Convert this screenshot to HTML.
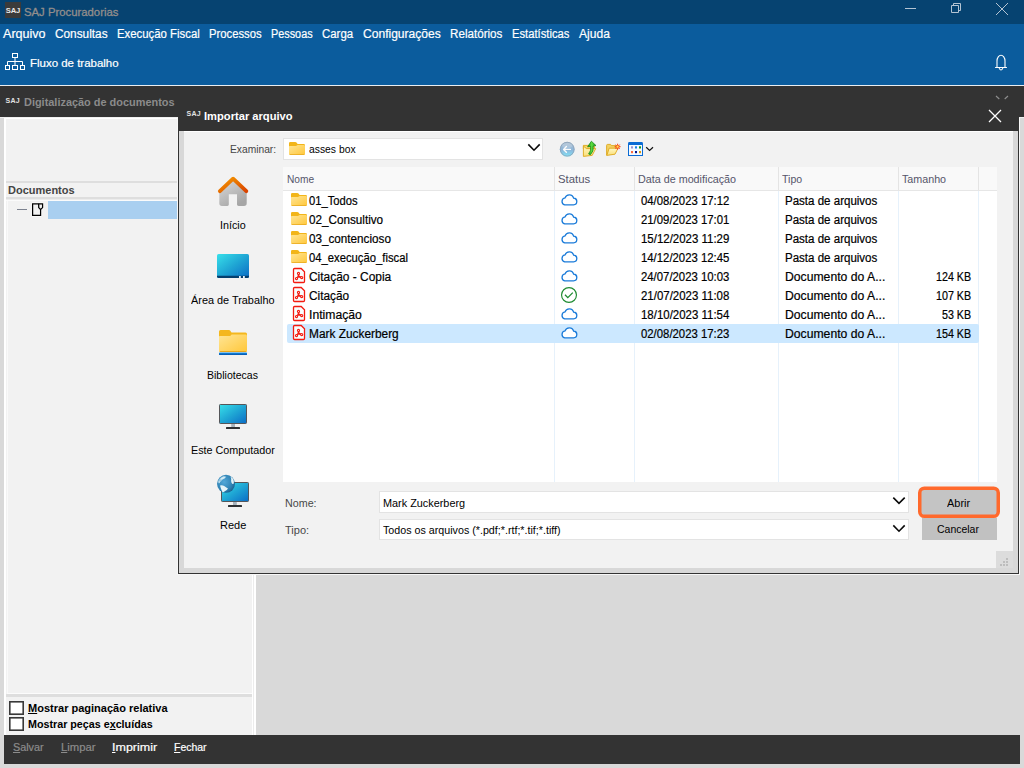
<!DOCTYPE html>
<html><head><meta charset="utf-8"><title>SAJ Procuradorias</title>
<style>
html,body{margin:0;padding:0}
body{width:1024px;height:768px;overflow:hidden;position:relative;background:#d9d9d9;font-family:"Liberation Sans",sans-serif}
.a{position:absolute}
.t{transform-origin:0 50%;position:absolute;white-space:pre;line-height:16px;height:16px;font-family:"Liberation Sans",sans-serif}
.t u{text-decoration:underline;text-underline-offset:1px}
svg{position:absolute;overflow:visible}

</style></head>
<body>
<!-- main window chrome -->
<div class="a" style="left:0;top:0;width:1024px;height:24px;background:#064371"></div>
<div class="a" style="left:0;top:24px;width:1024px;height:61px;background:#0b5c9d"></div>
<div class="a" style="left:0;top:85px;width:1024px;height:1px;background:#e9edf1"></div>
<div class="a" style="left:0;top:86px;width:1024px;height:31px;background:#333"></div>
<div class="a" style="left:0;top:117px;width:1024px;height:1px;background:#efefef"></div>

<!-- SAJ logo title -->
<div class="a" style="left:5px;top:2px;width:16px;height:16px;background:#3b3b3b"></div>
<div class="t" style="left:5px;top:6.5px;width:16px;text-align:center;font-size:7.6px;line-height:8px;height:8px;font-weight:700;color:#e9e9e9;letter-spacing:-0.1px">SAJ</div>

<!-- window controls -->
<svg style="left:896px;top:0" width="128" height="24" viewBox="896 0 128 24">
  <path d="M905 8.5H916" stroke="#b4c4d3" stroke-width="1" fill="none"/>
  <path d="M951.5 5.5H958.5V12.5H951.5Z M953.5 5.5V3.5H960.5V10.5H958.5" stroke="#b4c4d3" stroke-width="1" fill="none"/>
  <path d="M996 3L1008 15M1008 3L996 15" stroke="#b4c4d3" stroke-width="1" fill="none"/>
</svg>

<!-- fluxo icon -->
<svg style="left:0;top:48px" width="32" height="28" viewBox="0 48 32 28">
  <g stroke="#fff" stroke-width="1" fill="none">
    <rect x="12.5" y="53.5" width="5" height="4"/>
    <path d="M15 58V61.5M7.5 65.5V61.5H22.5V65.5M15 61.5V65.5"/>
    <rect x="5.5" y="65.5" width="4" height="4"/>
    <rect x="12.5" y="65.5" width="5" height="4"/>
    <rect x="20.5" y="65.5" width="4" height="4"/>
  </g>
</svg>

<!-- bell -->
<svg style="left:990px;top:50px" width="24" height="26" viewBox="990 50 24 26">
  <path d="M995.5 67.5H1006.5M997 67.5V61C997 57.5 999 55.3 1001 55.3C1003 55.3 1005 57.5 1005 61V67.5M999.3 68.5Q1001 71.5 1002.7 68.5" stroke="#fff" stroke-width="1.1" fill="none" stroke-linecap="round"/>
</svg>

<!-- dark bar SAJ small logo -->
<div class="t" style="left:5.5px;top:96.6px;font-size:7px;line-height:8px;height:8px;font-weight:700;color:#e2e2e2;letter-spacing:0.3px">SAJ</div>

<!-- chevron pieces -->
<svg style="left:990px;top:90px" width="24" height="14" viewBox="990 90 24 14">
  <path d="M996 96L999.3 99M1008 96L1004.7 99" stroke="#8f8f8f" stroke-width="1.1" fill="none"/>
</svg>

<!-- left panel -->
<div class="a" style="left:4px;top:118px;width:252px;height:617px;background:#fff"></div>
<div class="a" style="left:6px;top:119px;width:246px;height:616px;background:#f2f2f2"></div>
<div class="a" style="left:253px;top:119px;width:1px;height:616px;background:#ececec"></div>
<div class="a" style="left:6px;top:181px;width:246px;height:2px;background:#dedede"></div>
<div class="a" style="left:6px;top:197px;width:246px;height:2px;background:#dedede"></div>
<div class="a" style="left:6px;top:199px;width:246px;height:1px;background:#ececec"></div>
<div class="a" style="left:6px;top:200px;width:246px;height:1px;background:#fbfbfb"></div>
<div class="a" style="left:48px;top:201px;width:204px;height:18px;background:#a9cff0"></div>
<div class="a" style="left:7px;top:693px;width:245px;height:1px;background:#fcfcfc"></div>
<div class="a" style="left:7px;top:201px;width:1px;height:492px;background:#fafafa"></div>
<div class="a" style="left:6px;top:694px;width:246px;height:2.5px;background:#dedede"></div>

<svg style="left:10px;top:200px" width="40" height="20" viewBox="10 200 40 20">
  <path d="M17 209.5H27" stroke="#7d8390" stroke-width="1"/>
  <path d="M32.6 203.8H42.6V207.6L40.6 209.5V215.3H32.6Z" stroke="#fff" stroke-width="2.6" fill="#f2f2f2" stroke-linejoin="round"/>
  <path d="M32.6 203.8H42.6V207.6L40.6 209.5V215.3H32.6Z" stroke="#000" stroke-width="1.25" fill="#f2f2f2"/>
  <path d="M38.7 203.8V207.6L40.6 209.5" stroke="#000" stroke-width="1.25" fill="none"/>
</svg>
<!-- checkboxes -->
<svg style="left:8px;top:700px" width="18" height="32" viewBox="8 700 18 32"><rect x="9.8" y="701.8" width="13.4" height="12.4" fill="#fff" stroke="#383838" stroke-width="1.6"/><rect x="9.8" y="717.8" width="13.4" height="12.4" fill="#fff" stroke="#383838" stroke-width="1.6"/></svg>


<!-- bottom bar -->
<div class="a" style="left:4px;top:735px;width:1016px;height:29px;background:#333"></div>

<!-- ================= dialog ================= -->
<div class="a" style="left:178px;top:100px;width:841px;height:474px;background:#333;z-index:2"></div>
<div class="a" style="left:179px;top:131px;width:839px;height:442px;background:#d8d8d8;z-index:2"></div>
<div class="a" style="left:184px;top:131px;width:829px;height:437px;background:#f2f2f2;z-index:2"></div>
<div class="a" style="left:184px;top:131px;width:829px;height:1px;background:#fff;z-index:2"></div>
<div class="a" style="left:177px;top:118px;width:1px;height:457px;background:#f7f7f7;z-index:2"></div>
<div class="a" style="left:1019px;top:118px;width:1px;height:457px;background:#f7f7f7;z-index:2"></div>
<div class="a" style="left:177px;top:574px;width:843px;height:1px;background:#f7f7f7;z-index:2"></div>
<div class="t" style="left:186.5px;top:109.5px;font-size:7px;line-height:8px;height:8px;font-weight:700;color:#e2e2e2;letter-spacing:0.3px;z-index:5">SAJ</div>
<svg style="left:984px;top:106px;z-index:5" width="22" height="20" viewBox="984 106 22 20">
  <path d="M989 110L1001 122M1001 110L989 122" stroke="#fff" stroke-width="1.3" fill="none"/>
</svg>

<!-- examine combo -->
<div class="a" style="left:283px;top:138px;width:260px;height:22px;background:#fff;border:1px solid #e3e3e3;box-sizing:border-box;z-index:3"></div>
<!-- list -->
<div class="a" style="left:283px;top:167px;width:714px;height:315px;background:#fff;z-index:3"></div>
<div class="a" style="left:283px;top:167px;width:714px;height:23px;background:#f9f9f9;z-index:3"></div>
<div class="a" style="left:283px;top:190px;width:714px;height:1px;background:#e6e6e6;z-index:3"></div>
<!-- col lines -->
<div class="a" style="left:554px;top:167px;width:1px;height:23px;background:#e4e4e4;z-index:4"></div>
<div class="a" style="left:634px;top:167px;width:1px;height:23px;background:#e4e4e4;z-index:4"></div>
<div class="a" style="left:778px;top:167px;width:1px;height:23px;background:#e4e4e4;z-index:4"></div>
<div class="a" style="left:898px;top:167px;width:1px;height:23px;background:#e4e4e4;z-index:4"></div>
<div class="a" style="left:978px;top:167px;width:1px;height:23px;background:#e4e4e4;z-index:4"></div>
<div class="a" style="left:554px;top:191px;width:1px;height:291px;background:#e6f1fb;z-index:4"></div>
<div class="a" style="left:634px;top:191px;width:1px;height:291px;background:#e6f1fb;z-index:4"></div>
<div class="a" style="left:778px;top:191px;width:1px;height:291px;background:#e6f1fb;z-index:4"></div>
<div class="a" style="left:898px;top:191px;width:1px;height:291px;background:#e6f1fb;z-index:4"></div>
<div class="a" style="left:978px;top:191px;width:1px;height:291px;background:#e6f1fb;z-index:4"></div>
<!-- selected row -->
<div class="a" style="left:287px;top:324px;width:692px;height:19px;background:#cce8ff;border-radius:2px;z-index:4"></div>

<!-- fields -->
<div class="a" style="left:379px;top:491px;width:530px;height:22px;background:#fff;border:1px solid #e3e3e3;box-sizing:border-box;z-index:3"></div>
<div class="a" style="left:379px;top:519px;width:530px;height:21px;background:#fff;border:1px solid #e3e3e3;box-sizing:border-box;z-index:3"></div>
<!-- buttons -->
<div class="a" style="left:922px;top:518px;width:75px;height:22px;background:#c1c1c1;z-index:3"></div>
<svg style="left:916px;top:484px;z-index:4" width="88" height="38" viewBox="916 484 88 38"><rect x="919.75" y="488.25" width="78.5" height="28" rx="4.6" fill="#c4c4c4" stroke="#ff692c" stroke-width="3.5"/></svg>
<!-- grip -->
<div class="a" style="left:996px;top:551px;width:17px;height:17px;background:#dcdcdc;z-index:3"></div>
<svg style="left:996px;top:551px;z-index:4" width="17" height="17" viewBox="996 551 17 17">
  <g fill="#bdbdbd"><rect x="1006" y="558" width="2" height="2"/><rect x="1003" y="561" width="2" height="2"/><rect x="1006" y="561" width="2" height="2"/><rect x="1000" y="564" width="2" height="2"/><rect x="1003" y="564" width="2" height="2"/><rect x="1006" y="564" width="2" height="2"/></g>
</svg>
<!-- combo chevrons -->
<svg style="left:520px;top:140px;z-index:5" width="30" height="20" viewBox="520 140 30 20">
  <path d="M528.3 144.4L534 150.2L539.7 144.4" stroke="#0a0a0a" stroke-width="1.6" fill="none"/>
</svg>
<svg style="left:885px;top:490px;z-index:5" width="30" height="50" viewBox="885 490 30 50">
  <path d="M893.3 497.6L899 503.4L904.7 497.6M893.3 525.4L899 531.2L904.7 525.4" stroke="#0a0a0a" stroke-width="1.6" fill="none"/>
</svg>
<svg style="left:0;top:0;z-index:6" width="1024" height="768" viewBox="0 0 1024 768">
<defs>
 <linearGradient id="gFold" x1="0" y1="0" x2="1" y2="1"><stop offset="0" stop-color="#ffe595"/><stop offset="1" stop-color="#ffc73a"/></linearGradient>
 <linearGradient id="gScr" x1="0" y1="0" x2="1" y2="1"><stop offset="0" stop-color="#38e0ea"/><stop offset="0.5" stop-color="#1fa6d4"/><stop offset="1" stop-color="#0b6cc6"/></linearGradient>
 <linearGradient id="gRoof" x1="0" y1="0" x2="1" y2="1"><stop offset="0" stop-color="#f59a00"/><stop offset="1" stop-color="#d94300"/></linearGradient>
 <linearGradient id="gHouse" x1="0" y1="0" x2="0.6" y2="1"><stop offset="0" stop-color="#dddddd"/><stop offset="1" stop-color="#a6a6a6"/></linearGradient>
 <linearGradient id="gBack" x1="0" y1="0" x2="0" y2="1"><stop offset="0" stop-color="#aebfd0"/><stop offset="0.55" stop-color="#8db6da"/><stop offset="1" stop-color="#7fe4f8"/></linearGradient>
 <radialGradient id="gGlobe" cx="0.4" cy="0.4" r="0.65"><stop offset="0" stop-color="#52a8d8"/><stop offset="0.7" stop-color="#2f82b4"/><stop offset="1" stop-color="#1b5f8c"/></radialGradient>
 <linearGradient id="gBlueBar" x1="0" y1="0" x2="0" y2="1"><stop offset="0" stop-color="#1590e8"/><stop offset="1" stop-color="#0450a8"/></linearGradient>
 <linearGradient id="gOldFold" x1="0" y1="0" x2="0" y2="1"><stop offset="0" stop-color="#fff7c4"/><stop offset="1" stop-color="#fadf78"/></linearGradient>
 <linearGradient id="gGreen" x1="0" y1="0" x2="1" y2="0"><stop offset="0" stop-color="#128a12"/><stop offset="0.5" stop-color="#5fe040"/><stop offset="1" stop-color="#128a12"/></linearGradient>
</defs>
<g transform="translate(291,193)">
<path d="M0 1.2Q0 0 1.2 0H6.3Q7 0 7.5 .6L8.6 2H14.8Q16 2 16 3.2V5H0Z" fill="#f2b519"/>
<path d="M0 4.6Q0 4 .8 4H6.8Q7.4 4 7.9 3.6L8.6 3H14.9Q16 3 16 4.1V11.8Q16 13 14.8 13H1.2Q0 13 0 11.8Z" fill="url(#gFold)"/>
<path d="M.3 12.2Q.6 13 1.4 13H14.6Q15.4 13 15.7 12.2Z" fill="#e9a91d"/>
</g>
<g transform="translate(561,193.7)"><path d="M3.7 11.1H12.4A3.3 3.3 0 0 0 12.6 4.5A4.45 4.45 0 0 0 4.05 4.15A3.55 3.55 0 0 0 3.7 11.1Z" fill="#fff" stroke="#1a7bd9" stroke-width="1.3"/></g>
<g transform="translate(291,212)">
<path d="M0 1.2Q0 0 1.2 0H6.3Q7 0 7.5 .6L8.6 2H14.8Q16 2 16 3.2V5H0Z" fill="#f2b519"/>
<path d="M0 4.6Q0 4 .8 4H6.8Q7.4 4 7.9 3.6L8.6 3H14.9Q16 3 16 4.1V11.8Q16 13 14.8 13H1.2Q0 13 0 11.8Z" fill="url(#gFold)"/>
<path d="M.3 12.2Q.6 13 1.4 13H14.6Q15.4 13 15.7 12.2Z" fill="#e9a91d"/>
</g>
<g transform="translate(561,212.7)"><path d="M3.7 11.1H12.4A3.3 3.3 0 0 0 12.6 4.5A4.45 4.45 0 0 0 4.05 4.15A3.55 3.55 0 0 0 3.7 11.1Z" fill="#fff" stroke="#1a7bd9" stroke-width="1.3"/></g>
<g transform="translate(291,231)">
<path d="M0 1.2Q0 0 1.2 0H6.3Q7 0 7.5 .6L8.6 2H14.8Q16 2 16 3.2V5H0Z" fill="#f2b519"/>
<path d="M0 4.6Q0 4 .8 4H6.8Q7.4 4 7.9 3.6L8.6 3H14.9Q16 3 16 4.1V11.8Q16 13 14.8 13H1.2Q0 13 0 11.8Z" fill="url(#gFold)"/>
<path d="M.3 12.2Q.6 13 1.4 13H14.6Q15.4 13 15.7 12.2Z" fill="#e9a91d"/>
</g>
<g transform="translate(561,231.7)"><path d="M3.7 11.1H12.4A3.3 3.3 0 0 0 12.6 4.5A4.45 4.45 0 0 0 4.05 4.15A3.55 3.55 0 0 0 3.7 11.1Z" fill="#fff" stroke="#1a7bd9" stroke-width="1.3"/></g>
<g transform="translate(291,250)">
<path d="M0 1.2Q0 0 1.2 0H6.3Q7 0 7.5 .6L8.6 2H14.8Q16 2 16 3.2V5H0Z" fill="#f2b519"/>
<path d="M0 4.6Q0 4 .8 4H6.8Q7.4 4 7.9 3.6L8.6 3H14.9Q16 3 16 4.1V11.8Q16 13 14.8 13H1.2Q0 13 0 11.8Z" fill="url(#gFold)"/>
<path d="M.3 12.2Q.6 13 1.4 13H14.6Q15.4 13 15.7 12.2Z" fill="#e9a91d"/>
</g>
<g transform="translate(561,250.7)"><path d="M3.7 11.1H12.4A3.3 3.3 0 0 0 12.6 4.5A4.45 4.45 0 0 0 4.05 4.15A3.55 3.55 0 0 0 3.7 11.1Z" fill="#fff" stroke="#1a7bd9" stroke-width="1.3"/></g>
<g transform="translate(293,268)" stroke="#f31b10" fill="none">
<path d="M1.6 .5H8.2L11.5 3.8V13.4Q11.5 14.5 10.4 14.5H1.6Q.5 14.5 .5 13.4V1.6Q.5 .5 1.6 .5Z" fill="#f8fdfd" stroke-width="1.3"/>
<path d="M5.5 5.6V8.4L3.6 10.6M5.5 8.4L8.6 9.6" stroke-width="1.7"/>
<circle cx="5.5" cy="5.4" r="1.05" stroke-width="1.1" fill="#fff"/>
<circle cx="3.5" cy="10.6" r="1.05" stroke-width="1.1" fill="#fff"/>
<circle cx="8.7" cy="9.6" r="1.05" stroke-width="1.1" fill="#fff"/>
</g>
<g transform="translate(561,269.7)"><path d="M3.7 11.1H12.4A3.3 3.3 0 0 0 12.6 4.5A4.45 4.45 0 0 0 4.05 4.15A3.55 3.55 0 0 0 3.7 11.1Z" fill="#fff" stroke="#1a7bd9" stroke-width="1.3"/></g>
<g transform="translate(293,287)" stroke="#f31b10" fill="none">
<path d="M1.6 .5H8.2L11.5 3.8V13.4Q11.5 14.5 10.4 14.5H1.6Q.5 14.5 .5 13.4V1.6Q.5 .5 1.6 .5Z" fill="#f8fdfd" stroke-width="1.3"/>
<path d="M5.5 5.6V8.4L3.6 10.6M5.5 8.4L8.6 9.6" stroke-width="1.7"/>
<circle cx="5.5" cy="5.4" r="1.05" stroke-width="1.1" fill="#fff"/>
<circle cx="3.5" cy="10.6" r="1.05" stroke-width="1.1" fill="#fff"/>
<circle cx="8.7" cy="9.6" r="1.05" stroke-width="1.1" fill="#fff"/>
</g>
<g><circle cx="569" cy="295.0" r="7.45" fill="#fff" stroke="#1f8b31" stroke-width="1.15"/><path d="M565 294.7L567.8 297.6L572.8 292.6" fill="none" stroke="#1f8b31" stroke-width="1.3"/></g>
<g transform="translate(293,306)" stroke="#f31b10" fill="none">
<path d="M1.6 .5H8.2L11.5 3.8V13.4Q11.5 14.5 10.4 14.5H1.6Q.5 14.5 .5 13.4V1.6Q.5 .5 1.6 .5Z" fill="#f8fdfd" stroke-width="1.3"/>
<path d="M5.5 5.6V8.4L3.6 10.6M5.5 8.4L8.6 9.6" stroke-width="1.7"/>
<circle cx="5.5" cy="5.4" r="1.05" stroke-width="1.1" fill="#fff"/>
<circle cx="3.5" cy="10.6" r="1.05" stroke-width="1.1" fill="#fff"/>
<circle cx="8.7" cy="9.6" r="1.05" stroke-width="1.1" fill="#fff"/>
</g>
<g transform="translate(561,307.7)"><path d="M3.7 11.1H12.4A3.3 3.3 0 0 0 12.6 4.5A4.45 4.45 0 0 0 4.05 4.15A3.55 3.55 0 0 0 3.7 11.1Z" fill="#fff" stroke="#1a7bd9" stroke-width="1.3"/></g>
<g transform="translate(293,325)" stroke="#f31b10" fill="none">
<path d="M1.6 .5H8.2L11.5 3.8V13.4Q11.5 14.5 10.4 14.5H1.6Q.5 14.5 .5 13.4V1.6Q.5 .5 1.6 .5Z" fill="#f8fdfd" stroke-width="1.3"/>
<path d="M5.5 5.6V8.4L3.6 10.6M5.5 8.4L8.6 9.6" stroke-width="1.7"/>
<circle cx="5.5" cy="5.4" r="1.05" stroke-width="1.1" fill="#fff"/>
<circle cx="3.5" cy="10.6" r="1.05" stroke-width="1.1" fill="#fff"/>
<circle cx="8.7" cy="9.6" r="1.05" stroke-width="1.1" fill="#fff"/>
</g>
<g transform="translate(561,326.7)"><path d="M3.7 11.1H12.4A3.3 3.3 0 0 0 12.6 4.5A4.45 4.45 0 0 0 4.05 4.15A3.55 3.55 0 0 0 3.7 11.1Z" fill="#fff" stroke="#1a7bd9" stroke-width="1.3"/></g>
<g transform="translate(289,142)">
<path d="M0 1.2Q0 0 1.2 0H6.3Q7 0 7.5 .6L8.6 2H14.8Q16 2 16 3.2V5H0Z" fill="#f2b519"/>
<path d="M0 4.6Q0 4 .8 4H6.8Q7.4 4 7.9 3.6L8.6 3H14.9Q16 3 16 4.1V11.8Q16 13 14.8 13H1.2Q0 13 0 11.8Z" fill="url(#gFold)"/>
<path d="M.3 12.2Q.6 13 1.4 13H14.6Q15.4 13 15.7 12.2Z" fill="#e9a91d"/>
</g>
<g>
<path d="M219.3 190.5L233 178.5L246.7 190.5V203.3Q246.7 206 244 206H238.6Q237 206 237 204.6V194.2H228.8V204.6Q228.8 206 227.4 206H222Q219.3 206 219.3 203.3Z" fill="url(#gHouse)"/>
<path d="M219.9 191.1L233.1 178.7L246.3 191.1" fill="none" stroke="url(#gRoof)" stroke-width="3.9" stroke-linecap="round" stroke-linejoin="round"/>
</g>
<g>
<rect x="217" y="254" width="32" height="24" rx="1.6" fill="url(#gScr)"/>
<path d="M217 275.8H249V276.6Q249 278 247.4 278H218.6Q217 278 217 276.6Z" fill="#053f6e"/>
<rect x="239" y="276" width="1.8" height="2" fill="#e8f2fa"/><rect x="243" y="276" width="1.8" height="2" fill="#e8f2fa"/>
</g>
<g>
<path d="M219 331.5Q219 330 220.5 330H229Q229.8 330 230.3 330.7L231.5 332.5H245.5Q247 332.5 247 334V338H219Z" fill="#f4b71e"/>
<path d="M219 336.6Q219 336 219.8 336H229.5Q230.2 336 230.7 335.5L231.6 334.5H245.6Q247 334.5 247 335.9V350.5Q247 352 245.5 352H220.5Q219 352 219 350.5Z" fill="url(#gFold)"/>
<path d="M219.3 351Q219.7 352 220.8 352H245.2Q246.3 352 246.7 351Z" fill="#eaa81c"/>
<rect x="219" y="352.6" width="28" height="2.5" rx=".6" fill="url(#gBlueBar)"/>
</g>
<g>
<rect x="219.5" y="404.5" width="27" height="19" rx=".8" fill="url(#gScr)" stroke="#555659" stroke-width="1"/>
<rect x="231.2" y="424" width="3.8" height="3" fill="#a8b3bc"/>
<rect x="226" y="427" width="14" height="2" rx=".5" fill="#2e3134"/>
</g>
<g>
<rect x="221.5" y="482.5" width="27" height="19" rx=".8" fill="url(#gScr)" stroke="#555659" stroke-width="1"/>
<rect x="233" y="502" width="3.8" height="3" fill="#a8b3bc"/>
<rect x="228" y="505" width="14" height="2" rx=".5" fill="#2e3134"/>
</g>
<g>
<circle cx="226" cy="483.8" r="9" fill="url(#gGlobe)"/>
<path d="M221.5 477.8Q223.5 476.3 225.5 477.2Q224.5 478.8 222.8 478.9Q221.5 479.8 220.2 479.2Z" fill="#d9eef6"/>
<path d="M230.6 476.8Q232.5 477.6 233.3 479.3Q234.3 481.5 233.8 483.6Q232.6 484.6 231.6 483Q230.8 480.9 231.2 479Z" fill="#e3f2f7"/>
<path d="M220 485.6Q222 484.6 224.2 486Q226.5 487.6 228 488.6Q227 490.4 225.2 491Q223.6 492.6 222.4 492Q221 489.6 220 485.6Z" fill="#e6f4f8"/>
<path d="M218.2 481.6Q219.2 480.8 220.2 481.6Q220 483 218.9 483.4Z" fill="#bfe0ee"/><path d="M218.3 480.4Q219.8 477.4 223 476.2Q225 475.8 226.4 476.8Q224.6 479 222.4 479.8Q221 482.2 218.6 482.8Z" fill="#cfeaf4" opacity=".6"/>
</g>
<g>
<circle cx="567.2" cy="149.2" r="7.4" fill="url(#gBack)"/>
<circle cx="567.2" cy="149.2" r="6.9" fill="none" stroke="#8ea3b9" stroke-width="1" opacity=".85"/><ellipse cx="567.2" cy="145.6" rx="5" ry="2.6" fill="#fff" opacity=".18"/>
<path d="M570.4 149.4H564M566.4 146.6L563.6 149.4L566.4 152.2" fill="none" stroke="#fbfbfb" stroke-width="1.4" stroke-linecap="round" stroke-linejoin="round"/>
</g>
<g>
<path d="M583.4 145.4H588.6L589.4 146.6H594.6V149H583.4Z" fill="#f4d66a" stroke="#dca71c" stroke-width=".9"/>
<path d="M583.4 156.4V146.2L586.5 148.6H595.7L592.2 155.4Z" fill="url(#gOldFold)" stroke="#dca71c" stroke-width=".9" stroke-linejoin="round"/>
<path d="M588.6 154Q591.4 150.4 590.6 146.4L587.6 146.8L591.4 141.2L596 145.6L593.2 146Q594 151.4 590.4 154.8Z" fill="url(#gGreen)" stroke="#0f8312" stroke-width=".7" stroke-linejoin="round"/>
</g>
<g>
<path d="M606.6 155.4V145.4Q606.6 144.4 607.6 144.4H610.6L611.4 145.6H616V148.2" fill="#f2d262" stroke="#dca71c" stroke-width=".9"/>
<path d="M606.8 155.4L609.2 148.2H618L615 154.2Z" fill="url(#gOldFold)" stroke="#dca71c" stroke-width=".9" stroke-linejoin="round"/>
<g stroke="#f5421c" stroke-width="1" stroke-linecap="round"><path d="M617.6 144.1V149.3M615 146.7H620.2M615.8 144.9L619.4 148.5M619.4 144.9L615.8 148.5"/></g>
<circle cx="617.6" cy="146.7" r="2" fill="#f8571f"/><circle cx="617.6" cy="146.7" r="1.1" fill="#ffe04a"/>
</g>
<g>
<path d="M628 143.4Q628 142 629.4 142H641.6Q643 142 643 143.4V156H628Z" fill="#0a6bd4"/>
<rect x="629" y="145" width="13" height="10" fill="#f4f9ff"/>
<rect x="631" y="146.3" width="2" height="2.2" fill="#9c92cf"/><rect x="635" y="146.3" width="2" height="2.2" fill="#1380ea"/><rect x="639" y="146.3" width="2" height="2.2" fill="#10981a"/>
<rect x="631" y="151" width="2" height="2.2" fill="#ff6a3c"/><rect x="635" y="151" width="2" height="2.2" fill="#00158c"/><rect x="639" y="151" width="2" height="2.2" fill="#d9990f"/>
<path d="M646.2 147.2L649.6 150.5L653 147.2" fill="none" stroke="#111" stroke-width="1.2"/>
</g>
</svg>
<div class='t' style='left:24.00px;top:4.08px;font-size:11.6px;font-weight:400;color:#938e8c;transform:scaleX(0.9767);-webkit-text-stroke:0.3px #938e8c;'>SAJ Procuradorias</div>
<div class='t' style='left:2.80px;top:25.87px;font-size:12.5px;font-weight:400;color:#fff;transform:scaleX(1.0049);-webkit-text-stroke:0.2px #fff;'>Arquivo</div>
<div class='t' style='left:54.80px;top:25.87px;font-size:12.5px;font-weight:400;color:#fff;transform:scaleX(0.9461);-webkit-text-stroke:0.2px #fff;'>Consultas</div>
<div class='t' style='left:116.80px;top:25.87px;font-size:12.5px;font-weight:400;color:#fff;transform:scaleX(0.9097);-webkit-text-stroke:0.2px #fff;'>Execução Fiscal</div>
<div class='t' style='left:208.80px;top:25.87px;font-size:12.5px;font-weight:400;color:#fff;transform:scaleX(0.9013);-webkit-text-stroke:0.2px #fff;'>Processos</div>
<div class='t' style='left:270.80px;top:25.87px;font-size:12.5px;font-weight:400;color:#fff;transform:scaleX(0.8675);-webkit-text-stroke:0.2px #fff;'>Pessoas</div>
<div class='t' style='left:321.80px;top:25.87px;font-size:12.5px;font-weight:400;color:#fff;transform:scaleX(0.9134);-webkit-text-stroke:0.2px #fff;'>Carga</div>
<div class='t' style='left:362.80px;top:25.87px;font-size:12.5px;font-weight:400;color:#fff;transform:scaleX(0.9651);-webkit-text-stroke:0.2px #fff;'>Configurações</div>
<div class='t' style='left:449.80px;top:25.87px;font-size:12.5px;font-weight:400;color:#fff;transform:scaleX(0.9310);-webkit-text-stroke:0.2px #fff;'>Relatórios</div>
<div class='t' style='left:512.00px;top:25.87px;font-size:12.5px;font-weight:400;color:#fff;transform:scaleX(0.8980);-webkit-text-stroke:0.2px #fff;'>Estatísticas</div>
<div class='t' style='left:578.50px;top:25.87px;font-size:12.5px;font-weight:400;color:#fff;transform:scaleX(0.9661);-webkit-text-stroke:0.2px #fff;'>Ajuda</div>
<div class='t' style='left:29.80px;top:55.08px;font-size:11.3px;font-weight:400;color:#fff;transform:scaleX(1.0149);-webkit-text-stroke:0.2px #fff;'>Fluxo de trabalho</div>
<div class='t' style='left:23.80px;top:93.95px;font-size:11.7px;font-weight:700;color:#8b8b8b;transform:scaleX(0.9350);'>Digitalização de documentos</div>
<div class='t' style='left:203.80px;top:107.95px;font-size:11.7px;font-weight:700;color:#fff;transform:scaleX(0.9540);z-index:5;'>Importar arquivo</div>
<div class='t' style='left:7.80px;top:181.95px;font-size:11.7px;font-weight:700;color:#444;transform:scaleX(0.9407);'>Documentos</div>
<div class='t' style='left:27.80px;top:699.95px;font-size:11.7px;font-weight:700;color:#000;transform:scaleX(0.9425);'><u>M</u>ostrar paginação relativa</div>
<div class='t' style='left:27.80px;top:715.95px;font-size:11.7px;font-weight:700;color:#000;transform:scaleX(0.9177);'>Mostrar peças e<u>x</u>cluídas</div>
<div class='t' style='left:12.80px;top:738.95px;font-size:11.7px;font-weight:400;color:#8c8c8c;transform:scaleX(0.9233);-webkit-text-stroke:0.2px #8c8c8c;'><u>S</u>alvar</div>
<div class='t' style='left:60.80px;top:738.95px;font-size:11.7px;font-weight:400;color:#8c8c8c;transform:scaleX(0.9683);-webkit-text-stroke:0.2px #8c8c8c;'><u>L</u>impar</div>
<div class='t' style='left:111.80px;top:738.95px;font-size:11.7px;font-weight:400;color:#fff;transform:scaleX(1.0686);-webkit-text-stroke:0.2px #fff;'><u>I</u>mprimir</div>
<div class='t' style='left:173.80px;top:738.95px;font-size:11.7px;font-weight:400;color:#fff;transform:scaleX(0.8958);-webkit-text-stroke:0.2px #fff;'><u>F</u>echar</div>
<div class='t' style='left:229.80px;top:141.19px;font-size:11px;font-weight:400;color:#454545;transform:scaleX(0.9307);z-index:5;'>Examinar:</div>
<div class='t' style='left:308.80px;top:141.19px;font-size:11px;font-weight:400;color:#000;transform:scaleX(0.9408);z-index:5;'>asses box</div>
<div class='t' style='left:286.80px;top:171.19px;font-size:11px;font-weight:400;color:#55556a;transform:scaleX(0.9235);z-index:5;'>Nome</div>
<div class='t' style='left:557.80px;top:171.19px;font-size:11px;font-weight:400;color:#55556a;transform:scaleX(1.0293);z-index:5;'>Status</div>
<div class='t' style='left:637.80px;top:171.19px;font-size:11px;font-weight:400;color:#55556a;transform:scaleX(0.9782);z-index:5;'>Data de modificação</div>
<div class='t' style='left:782.30px;top:171.19px;font-size:11px;font-weight:400;color:#55556a;transform:scaleX(0.9571);z-index:5;'>Tipo</div>
<div class='t' style='left:902.30px;top:171.19px;font-size:11px;font-weight:400;color:#55556a;transform:scaleX(0.9742);z-index:5;'>Tamanho</div>
<div class='t' style='left:308.80px;top:192.84px;font-size:12px;font-weight:400;color:#000;transform:scaleX(0.9338);z-index:5;-webkit-text-stroke:0.2px #000;'>01_Todos</div>
<div class='t' style='left:640.90px;top:192.84px;font-size:12px;font-weight:400;color:#000;transform:scaleX(0.9452);z-index:5;-webkit-text-stroke:0.2px #000;'>04/08/2023 17:12</div>
<div class='t' style='left:784.80px;top:192.84px;font-size:12px;font-weight:400;color:#000;transform:scaleX(0.9608);z-index:5;-webkit-text-stroke:0.2px #000;'>Pasta de arquivos</div>
<div class='t' style='left:308.80px;top:211.84px;font-size:12px;font-weight:400;color:#000;transform:scaleX(0.9742);z-index:5;-webkit-text-stroke:0.2px #000;'>02_Consultivo</div>
<div class='t' style='left:640.90px;top:211.84px;font-size:12px;font-weight:400;color:#000;transform:scaleX(0.9452);z-index:5;-webkit-text-stroke:0.2px #000;'>21/09/2023 17:01</div>
<div class='t' style='left:784.80px;top:211.84px;font-size:12px;font-weight:400;color:#000;transform:scaleX(0.9608);z-index:5;-webkit-text-stroke:0.2px #000;'>Pasta de arquivos</div>
<div class='t' style='left:308.80px;top:230.84px;font-size:12px;font-weight:400;color:#000;transform:scaleX(0.9741);z-index:5;-webkit-text-stroke:0.2px #000;'>03_contencioso</div>
<div class='t' style='left:640.90px;top:230.84px;font-size:12px;font-weight:400;color:#000;transform:scaleX(0.9543);z-index:5;-webkit-text-stroke:0.2px #000;'>15/12/2023 11:29</div>
<div class='t' style='left:784.80px;top:230.84px;font-size:12px;font-weight:400;color:#000;transform:scaleX(0.9608);z-index:5;-webkit-text-stroke:0.2px #000;'>Pasta de arquivos</div>
<div class='t' style='left:308.80px;top:249.84px;font-size:12px;font-weight:400;color:#000;transform:scaleX(0.9383);z-index:5;-webkit-text-stroke:0.2px #000;'>04_execução_fiscal</div>
<div class='t' style='left:640.90px;top:249.84px;font-size:12px;font-weight:400;color:#000;transform:scaleX(0.9452);z-index:5;-webkit-text-stroke:0.2px #000;'>14/12/2023 12:45</div>
<div class='t' style='left:784.80px;top:249.84px;font-size:12px;font-weight:400;color:#000;transform:scaleX(0.9608);z-index:5;-webkit-text-stroke:0.2px #000;'>Pasta de arquivos</div>
<div class='t' style='left:308.80px;top:268.84px;font-size:12px;font-weight:400;color:#000;transform:scaleX(0.9937);z-index:5;-webkit-text-stroke:0.2px #000;'>Citação - Copia</div>
<div class='t' style='left:640.90px;top:268.84px;font-size:12px;font-weight:400;color:#000;transform:scaleX(0.9452);z-index:5;-webkit-text-stroke:0.2px #000;'>24/07/2023 10:03</div>
<div class='t' style='left:784.80px;top:268.84px;font-size:12px;font-weight:400;color:#000;transform:scaleX(1.0159);z-index:5;-webkit-text-stroke:0.2px #000;'>Documento do A...</div>
<div class='t' style='left:935.80px;top:268.84px;font-size:12px;font-weight:400;color:#000;transform:scaleX(0.8914);z-index:5;-webkit-text-stroke:0.2px #000;'>124 KB</div>
<div class='t' style='left:308.80px;top:287.84px;font-size:12px;font-weight:400;color:#000;transform:scaleX(0.9856);z-index:5;-webkit-text-stroke:0.2px #000;'>Citação</div>
<div class='t' style='left:640.90px;top:287.84px;font-size:12px;font-weight:400;color:#000;transform:scaleX(0.9543);z-index:5;-webkit-text-stroke:0.2px #000;'>21/07/2023 11:08</div>
<div class='t' style='left:784.80px;top:287.84px;font-size:12px;font-weight:400;color:#000;transform:scaleX(1.0159);z-index:5;-webkit-text-stroke:0.2px #000;'>Documento do A...</div>
<div class='t' style='left:935.80px;top:287.84px;font-size:12px;font-weight:400;color:#000;transform:scaleX(0.8914);z-index:5;-webkit-text-stroke:0.2px #000;'>107 KB</div>
<div class='t' style='left:308.80px;top:306.84px;font-size:12px;font-weight:400;color:#000;transform:scaleX(1.0148);z-index:5;-webkit-text-stroke:0.2px #000;'>Intimação</div>
<div class='t' style='left:640.90px;top:306.84px;font-size:12px;font-weight:400;color:#000;transform:scaleX(0.9543);z-index:5;-webkit-text-stroke:0.2px #000;'>18/10/2023 11:54</div>
<div class='t' style='left:784.80px;top:306.84px;font-size:12px;font-weight:400;color:#000;transform:scaleX(1.0159);z-index:5;-webkit-text-stroke:0.2px #000;'>Documento do A...</div>
<div class='t' style='left:941.80px;top:306.84px;font-size:12px;font-weight:400;color:#000;transform:scaleX(0.8898);z-index:5;-webkit-text-stroke:0.2px #000;'>53 KB</div>
<div class='t' style='left:308.80px;top:325.84px;font-size:12px;font-weight:400;color:#000;transform:scaleX(0.9889);z-index:5;-webkit-text-stroke:0.2px #000;'>Mark Zuckerberg</div>
<div class='t' style='left:640.90px;top:325.84px;font-size:12px;font-weight:400;color:#000;transform:scaleX(0.9452);z-index:5;-webkit-text-stroke:0.2px #000;'>02/08/2023 17:23</div>
<div class='t' style='left:784.80px;top:325.84px;font-size:12px;font-weight:400;color:#000;transform:scaleX(1.0159);z-index:5;-webkit-text-stroke:0.2px #000;'>Documento do A...</div>
<div class='t' style='left:935.80px;top:325.84px;font-size:12px;font-weight:400;color:#000;transform:scaleX(0.8914);z-index:5;-webkit-text-stroke:0.2px #000;'>154 KB</div>
<div class='t' style='left:219.85px;top:217.19px;font-size:11px;font-weight:400;color:#000;transform:scaleX(0.9735);z-index:5;'>Início</div>
<div class='t' style='left:190.90px;top:292.19px;font-size:11px;font-weight:400;color:#000;transform:scaleX(0.9894);z-index:5;'>Área de Trabalho</div>
<div class='t' style='left:207.20px;top:367.19px;font-size:11px;font-weight:400;color:#000;transform:scaleX(0.9567);z-index:5;'>Bibliotecas</div>
<div class='t' style='left:190.75px;top:442.19px;font-size:11px;font-weight:400;color:#000;transform:scaleX(0.9789);z-index:5;'>Este Computador</div>
<div class='t' style='left:219.50px;top:517.19px;font-size:11px;font-weight:400;color:#000;transform:scaleX(1.0001);z-index:5;'>Rede</div>
<div class='t' style='left:284.80px;top:495.19px;font-size:11px;font-weight:400;color:#484848;transform:scaleX(0.9751);z-index:5;'>Nome:</div>
<div class='t' style='left:284.80px;top:521.69px;font-size:11px;font-weight:400;color:#484848;transform:scaleX(1.0022);z-index:5;'>Tipo:</div>
<div class='t' style='left:382.60px;top:495.19px;font-size:11px;font-weight:400;color:#000;transform:scaleX(0.9875);z-index:5;'>Mark Zuckerberg</div>
<div class='t' style='left:382.60px;top:521.69px;font-size:11px;font-weight:400;color:#000;transform:scaleX(0.9726);z-index:5;'>Todos os arquivos (*.pdf;*.rtf;*.tif;*.tiff)</div>
<div class='t' style='left:947.30px;top:494.69px;font-size:11px;font-weight:400;color:#000;transform:scaleX(0.9942);z-index:5;'>Abrir</div>
<div class='t' style='left:937.00px;top:520.69px;font-size:11px;font-weight:400;color:#000;transform:scaleX(0.9516);z-index:5;'>Cancelar</div>
</body></html>
